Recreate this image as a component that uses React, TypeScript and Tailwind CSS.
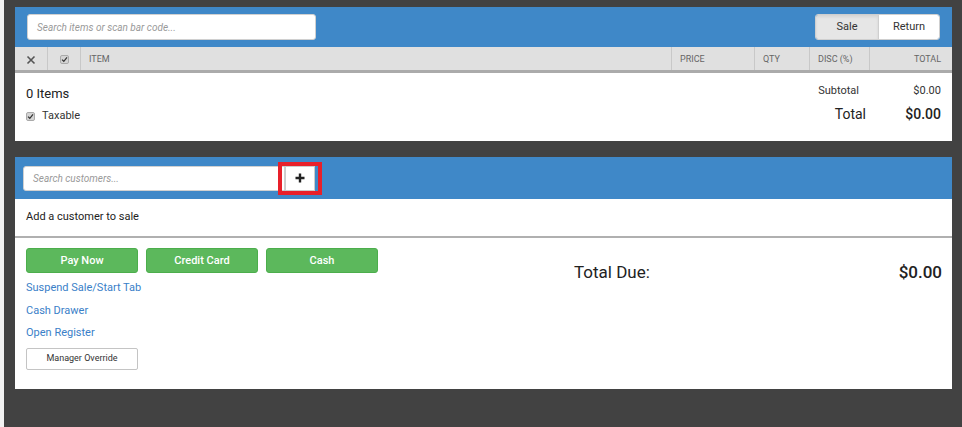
import React from "react";

export default function App() {
  return (
    <div
      className="w-[962px] h-[427px] bg-[#424242] flex overflow-hidden"
      style={{ fontFamily: "Roboto, 'Liberation Sans', sans-serif" }}
    >
      <div className="w-[4px] bg-[#f2f2f2] shrink-0" />
      <div className="flex-1 pl-[11px] pr-[10px] pt-[7px] flex flex-col">
        {/* Top panel */}
        <div className="bg-white h-[134px] flex flex-col">
          <div className="h-[40px] bg-[#3f88c8] flex items-center pl-[12px] pr-[12px] justify-between">
            <div className="w-[289px] h-[26px] bg-white rounded-[3px] border border-[#d0d0d0] flex items-center px-[9px]">
              <span className="text-[10px] italic text-[#9a9a9a]">Search items or scan bar code...</span>
            </div>
            <div className="flex h-[26px] rounded-[3px] overflow-hidden border border-[#cfcfcf]">
              <div className="w-[63px] bg-[#e6e6e6] flex items-center justify-center text-[11px] text-[#333] border-r border-[#cfcfcf] shadow-[inset_0_2px_3px_rgba(0,0,0,0.08)]">Sale</div>
              <div className="w-[60px] bg-white flex items-center justify-center text-[11px] text-[#333]">Return</div>
            </div>
          </div>
          <div className="h-[23px] bg-[#e0e0e0] flex text-[9px] text-[#666] uppercase">
            <div className="w-[33px] flex items-center justify-center border-r border-[#c8c8c8] pt-[2px]">
              <svg width="10" height="10" viewBox="0 0 10 10"><path d="M1.5 1.5 L8.5 8.5 M8.5 1.5 L1.5 8.5" stroke="#555" strokeWidth="1.6" /></svg>
            </div>
            <div className="w-[33px] flex items-center justify-center border-r border-[#c8c8c8] pt-[2px]">
              <div className="w-[9px] h-[9px] rounded-[2px] bg-[#d4d4d4] border border-[#aaa] flex items-center justify-center">
                <svg width="7" height="7" viewBox="0 0 7 7"><path d="M1 3.6 L2.8 5.3 L6 1.3" stroke="#333" strokeWidth="1.2" fill="none" /></svg>
              </div>
            </div>
            <div className="flex-1 flex items-center pl-[8px] pt-[2px] border-r border-[#c8c8c8]">Item</div>
            <div className="w-[83px] flex items-center pl-[8px] pt-[2px] border-r border-[#c8c8c8]">Price</div>
            <div className="w-[55px] flex items-center pl-[8px] pt-[2px] border-r border-[#c8c8c8]">Qty</div>
            <div className="w-[60px] flex items-center pl-[8px] pt-[2px] border-r border-[#c8c8c8]">Disc (%)</div>
            <div className="w-[82px] flex items-center justify-end pr-[11px] pt-[2px]">Total</div>
          </div>
          <div className="h-[3px] bg-[#ababab]" />
          <div className="flex-1 flex justify-between pl-[11px] pr-[11px] pt-[12px]">
            <div className="flex flex-col">
              <div className="text-[13px] text-[#222] leading-[16px] mt-[1px]">0 Items</div>
              <div className="flex items-center mt-[6px] text-[11px] text-[#333]">
                <div className="w-[9px] h-[9px] rounded-[2px] bg-[#d4d4d4] border border-[#aaa] flex items-center justify-center mr-[7px]">
                  <svg width="7" height="7" viewBox="0 0 7 7"><path d="M1 3.6 L2.8 5.3 L6 1.3" stroke="#333" strokeWidth="1.2" fill="none" /></svg>
                </div>
                Taxable
              </div>
            </div>
            <div className="flex flex-col items-end">
              <div className="flex text-[11px] text-[#333] leading-[14px] mt-[-1px]">
                <span className="w-[43px] text-right">Subtotal</span>
                <span className="w-[82px] text-right">$0.00</span>
              </div>
              <div className="flex text-[14px] text-[#222] leading-[17px] mt-[8px]">
                <span className="w-[50px] text-right">Total</span>
                <span className="w-[75px] text-right font-medium">$0.00</span>
              </div>
            </div>
          </div>
        </div>

        {/* Second panel */}
        <div className="bg-white mt-[16px] h-[232px] flex flex-col">
          <div className="h-[42px] bg-[#3f88c8] flex items-center pl-[8px]">
            <div className="relative flex items-center">
              <div className="w-[262px] h-[25px] bg-white rounded-l-[3px] border border-[#d0d0d0] flex items-center px-[9px]">
                <span className="text-[10px] italic text-[#9a9a9a]">Search customers...</span>
              </div>
              <div className="w-[30px] h-[25px] bg-white border border-[#ccc] flex items-center justify-center">
                <svg width="10" height="10" viewBox="0 0 10 10"><path d="M5 0.5 V9.5 M0.5 5 H9.5" stroke="#222" strokeWidth="2.4" /></svg>
              </div>
              <div className="absolute left-[255px] top-[-4px] w-[44px] h-[33px] border-[4px] border-[#e8202a]" />
            </div>
          </div>
          <div className="h-[37px] flex items-center pl-[11px] text-[11px] text-[#222]">Add a customer to sale</div>
          <div className="h-[2px] bg-[#b0b0b0]" />
          <div className="flex-1 flex pl-[11px] pr-[10px] pt-[10px]">
            <div className="flex flex-col w-[400px]">
              <div className="flex gap-[8px]">
                <div className="w-[112px] h-[25px] rounded-[3px] bg-[#5cb85c] border border-[#4cae4c] text-white text-[11px] font-medium flex items-center justify-center pt-[1px]">Pay Now</div>
                <div className="w-[112px] h-[25px] rounded-[3px] bg-[#5cb85c] border border-[#4cae4c] text-white text-[11px] font-medium flex items-center justify-center pt-[1px]">Credit Card</div>
                <div className="w-[112px] h-[25px] rounded-[3px] bg-[#5cb85c] border border-[#4cae4c] text-white text-[11px] font-medium flex items-center justify-center pt-[1px]">Cash</div>
              </div>
              <div className="text-[11px] text-[#3a80c8] mt-[8px] leading-[14px]">Suspend Sale/Start Tab</div>
              <div className="text-[11px] text-[#3a80c8] mt-[9px] leading-[14px]">Cash Drawer</div>
              <div className="text-[11px] text-[#3a80c8] mt-[8px] leading-[14px]">Open Register</div>
              <div className="w-[112px] h-[22px] mt-[8px] rounded-[2px] border border-[#c4c4c4] bg-white text-[9px] text-[#333] flex items-center justify-center">Manager Override</div>
            </div>
            <div className="flex-1 flex justify-between items-start pl-[148px] pt-[14px]">
              <span className="text-[17px] text-[#222] leading-[20px]">Total Due:</span>
              <span className="text-[17px] text-[#222] font-medium leading-[20px]">$0.00</span>
            </div>
          </div>
        </div>
      </div>
    </div>
  );
}
